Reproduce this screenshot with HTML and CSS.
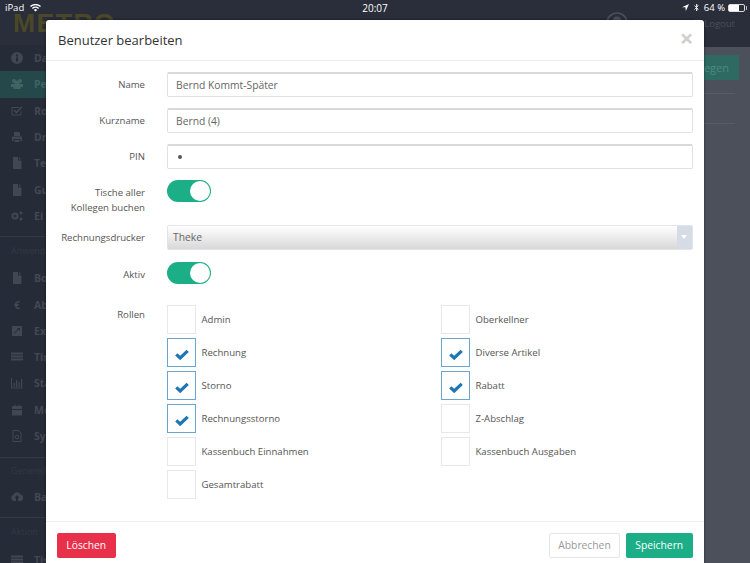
FILE: index.html
```html
<!DOCTYPE html>
<html lang="de">
<head>
	<meta charset="UTF-8">
	<title>Benutzer bearbeiten</title>
	<link rel="stylesheet" href="styles.css">
</head>
<body>
	<div class="app">
		<!-- Kopfzeile mit Statusleiste -->
		<div class="top">
			<div class="status">
				<div class="status-left">iPad
					<svg class="wifi" viewBox="0 0 14 10"><path d="M7 9.6 4.9 7.4a3 3 0 0 1 4.2 0zM3.6 6.2 2.4 5a6.6 6.6 0 0 1 9.2 0l-1.2 1.2a4.9 4.9 0 0 0-6.8 0zM1.2 3.8 0 2.6a10 10 0 0 1 14 0l-1.2 1.2a8.3 8.3 0 0 0-11.6 0z" fill="#fff"/></svg>
				</div>
				<div class="status-time">20:07</div>
				<div class="status-right">
					<svg class="loc" viewBox="0 0 8 8"><path d="M8 0 0 3.6h3.9L4.4 8z" fill="#fff"/></svg>
					<svg class="bt" viewBox="0 0 6 10"><path d="M.5 2.6 5 7 3 9V1l2 2L.5 7.4" fill="none" stroke="#fff"/></svg>
					<span>64 %</span>
					<div class="battery"><div class="battery-level"></div></div>
				</div>
			</div>
			<div class="brand">
				<div class="logo">METRO</div>
				<div class="user">
					<svg class="avatar" viewBox="0 0 22 22"><circle cx="11" cy="11" r="10" fill="none" stroke="#4b4f5b" stroke-width="1.6"/><circle cx="11" cy="9" r="4.5" fill="#4b4f5b"/></svg>
					<div class="logout">
						<svg class="logout-icon" viewBox="0 0 8 9"><path d="M7 .5H1v8h6" fill="none" stroke="#4b4f5b"/></svg>
						Logout
					</div>
				</div>
			</div>
		</div>
		<div class="under">
			<!-- Seitenleiste hinter dem Dialog -->
			<div class="side">
				<ul class="side-list">
					<li class="side-item"><svg class="side-icon" viewBox="0 0 12 12"><path d="M6 0a6 6 0 1 0 0 12A6 6 0 0 0 6 0zM5 2.5h2v2H5zM5 5.5h2v4H5z" fill-rule="evenodd"/></svg>Da</li>
					<li class="side-item side-active"><svg class="side-icon" viewBox="0 0 12 12"><circle cx="3" cy="3" r="2"/><circle cx="9" cy="3" r="2"/><circle cx="6" cy="5" r="2.5"/><path d="M0 6h12v3H9.5v2h-7V9H0z"/></svg>Pe</li>
					<li class="side-item"><svg class="side-icon side-outline" viewBox="0 0 12 12"><path d="M10 6.5V10H1V2.5h7"/><path d="M3 5l2.5 2.5L11 1.500" stroke-width="1.6"/></svg>Ro</li>
					<li class="side-item"><svg class="side-icon" viewBox="0 0 12 12"><path d="M3 1h5l1 1v3H3zM1 5.500h10V10H9.500V8h-7v2H1zM3.500 9h5v2h-5z"/></svg>Dr</li>
					<li class="side-item"><svg class="side-icon" viewBox="0 0 12 12"><path d="M2 0h5v3.500h3.500V12H2zM8 0l2.500 2.500H8z"/></svg>Te</li>
					<li class="side-item"><svg class="side-icon" viewBox="0 0 12 12"><path d="M2 0h5v3.500h3.500V12H2zM8 0l2.500 2.500H8z"/></svg>Gu</li>
					<li class="side-item"><svg class="side-icon" viewBox="0 0 12 12"><circle cx="4" cy="6" r="2.6" fill="none" stroke-width="2" stroke="#434753"/><circle cx="10" cy="3" r="1.5"/><circle cx="10" cy="9" r="1.5"/></svg>Ei</li>
				</ul>
				<div class="side-head">Anwend</div>
				<ul class="side-list">
					<li class="side-item"><svg class="side-icon" viewBox="0 0 12 12"><path d="M2 0h5v3.500h3.500V12H2zM8 0l2.500 2.500H8z"/></svg>Bo</li>
					<li class="side-item"><span class="side-icon side-euro">€</span>Ab</li>
					<li class="side-item"><svg class="side-icon" viewBox="0 0 12 12"><path d="M1 1h10v10H1zM3 9l4.500-4.500L9 6V3H6l1 1-4.500 4.500z" fill-rule="evenodd"/></svg>Ex</li>
					<li class="side-item"><svg class="side-icon" viewBox="0 0 12 12"><path d="M0 1.500h12v2H0zM0 4.500h12v2H0zM0 7.500h12v2H0z"/></svg>Tin</li>
					<li class="side-item"><svg class="side-icon" viewBox="0 0 12 12"><path d="M0 1h1v9.500h11v1H0zM2.500 6h1.200v4H2.500zM5 3h1.200v7H5zM7.500 5h1.200v5H7.500zM10 2h1.200v8H10z"/></svg>Sta</li>
					<li class="side-item"><svg class="side-icon" viewBox="0 0 12 12"><path d="M1 2h2.500V.5h1V2h3V.5h1V2H11v3H1zM1 6h10v5.500H1z"/></svg>Mo</li>
					<li class="side-item"><svg class="side-icon side-outline" viewBox="0 0 12 12"><path d="M2 .5h5.500L10 3v8.500H2z"/><circle cx="6" cy="7" r="1.8"/></svg>Sys</li>
				</ul>
				<div class="side-head side-head-small">Generell</div>
				<ul class="side-list">
					<li class="side-item"><svg class="side-icon" viewBox="0 0 12 12"><path d="M3 10a3 3 0 0 1-.5-5.900 3.500 3.500 0 0 1 6.800-.5A3.200 3.200 0 0 1 9 10H7V7h1.500L6 4 3.500 7H5v3z"/></svg>Ba</li>
				</ul>
				<div class="side-head">Aktion</div>
				<ul class="side-list">
					<li class="side-item"><svg class="side-icon" viewBox="0 0 12 12"><path d="M0 1.500h12v2H0zM0 4.500h12v2H0zM0 7.500h12v2H0z"/></svg>Tis</li>
				</ul>
			</div>
			<div class="main">
				<div class="main-btn">egen</div>
				<div class="main-line"></div>
				<div class="main-line"></div>
			</div>
		</div>
	</div>

	<div class="dialog">
		<div class="dialog-title">
			Benutzer bearbeiten
			<span class="dialog-close">×</span>
		</div>
		<div class="dialog-content">
			<div class="row">
				<label class="row-label">Name</label>
				<input class="input" type="text" value="Bernd Kommt-Später">
			</div>
			<div class="row">
				<label class="row-label">Kurzname</label>
				<input class="input" type="text" value="Bernd (4)">
			</div>
			<div class="row">
				<label class="row-label">PIN</label>
				<div class="input input-pin"><span class="pin-dot"></span></div>
			</div>
			<div class="row row-double">
				<label class="row-label">Tische aller<br>Kollegen buchen</label>
				<div class="toggle"><div class="toggle-knob"></div></div>
			</div>
			<div class="row">
				<label class="row-label">Rechnungsdrucker</label>
				<div class="select">
					<div class="select-value">Theke</div>
					<div class="select-arrow"></div>
				</div>
			</div>
			<div class="row">
				<label class="row-label">Aktiv</label>
				<div class="toggle"><div class="toggle-knob"></div></div>
			</div>
			<div class="row row-roles">
				<label class="row-label">Rollen</label>
				<div class="roles">
					<div class="role"><span class="check"></span>Admin</div>
					<div class="role"><span class="check"></span>Oberkellner</div>
					<div class="role"><span class="check checked"><svg viewBox="0 0 14 11"><path d="M1.3 5.3 5.2 9 12.7 1.800" fill="none" stroke="#1f76b4" stroke-width="3.2"/></svg></span>Rechnung</div>
					<div class="role"><span class="check checked"><svg viewBox="0 0 14 11"><path d="M1.3 5.3 5.2 9 12.7 1.800" fill="none" stroke="#1f76b4" stroke-width="3.2"/></svg></span>Diverse Artikel</div>
					<div class="role"><span class="check checked"><svg viewBox="0 0 14 11"><path d="M1.3 5.3 5.2 9 12.7 1.800" fill="none" stroke="#1f76b4" stroke-width="3.2"/></svg></span>Storno</div>
					<div class="role"><span class="check checked"><svg viewBox="0 0 14 11"><path d="M1.3 5.3 5.2 9 12.7 1.800" fill="none" stroke="#1f76b4" stroke-width="3.2"/></svg></span>Rabatt</div>
					<div class="role"><span class="check checked"><svg viewBox="0 0 14 11"><path d="M1.3 5.3 5.2 9 12.7 1.800" fill="none" stroke="#1f76b4" stroke-width="3.2"/></svg></span>Rechnungsstorno</div>
					<div class="role"><span class="check"></span>Z-Abschlag</div>
					<div class="role"><span class="check"></span>Kassenbuch Einnahmen</div>
					<div class="role"><span class="check"></span>Kassenbuch Ausgaben</div>
					<div class="role"><span class="check"></span>Gesamtrabatt</div>
				</div>
			</div>
		</div>
		<div class="dialog-footer">
			<a class="btn btn-red" href="#">Löschen</a>
			<div class="footer-right">
				<a class="btn btn-white" href="#">Abbrechen</a>
				<a class="btn btn-green" href="#">Speichern</a>
			</div>
		</div>
	</div>
</body>
</html>
```

FILE: styles.css
```css
html, body {
	margin: 0;
	padding: 0;
	height: 100%;
	overflow: hidden;
}
body {
	font-family: "Open Sans", "Liberation Sans", sans-serif;
	font-size: 9.6px;
	color: #555;
	background: #4c505b;
}

/* Hintergrund */
.app {
	display: flex;
	flex-direction: column;
	height: 563px;
}
.top {
	height: 47px;
	background: #2a2d3a;
	flex: none;
}
.status {
	display: flex;
	justify-content: space-between;
	align-items: center;
	height: 15px;
	padding: 0 4px 0 5px;
	color: #fff;
	font-size: 9.5px;
	position: relative;
}
.status-left, .status-right {
	display: flex;
	align-items: center;
	gap: 4px;
}
.status-time {
	position: absolute;
	left: 0;
	right: 0;
	text-align: center;
	font-size: 10px;
}
.wifi { width: 11px; height: 8px; margin-left: 2px; }
.loc { width: 7px; height: 7px; }
.bt { width: 5px; height: 9px; margin: 0 1px; }
.battery {
	width: 15px;
	height: 6px;
	border: 1px solid #ddd;
	border-radius: 2px;
	margin: 0 1px 0 -1px;
	position: relative;
}
.battery:after {
	content: "";
	position: absolute;
	right: -3px;
	top: 1px;
	width: 1.5px;
	height: 4px;
	background: #bbb;
}
.battery-level {
	width: 10px;
	height: 6px;
	background: #fff;
}
.brand {
	display: flex;
	justify-content: space-between;
	height: 32px;
}
.logo {
	margin: -7px 0 0 13px;
	font-family: "Liberation Sans", sans-serif;
	font-weight: bold;
	font-size: 26.5px;
	letter-spacing: 1.5px;
	color: #4a4827;
}
.user {
	display: flex;
	align-items: flex-start;
	gap: 66px;
	padding-right: 15px;
	color: #4b4f5b;
	font-size: 9.5px;
}
.avatar { width: 22px; height: 22px; margin-top: -3px; }
.logout {
	display: flex;
	align-items: center;
	gap: 3px;
	height: 16px;
}
.logout-icon { width: 7px; height: 9px; }
.under {
	display: flex;
	flex: 1;
	min-height: 0;
}

/* Seitenleiste */
.side {
	width: 46px;
	flex: none;
	margin-top: -2px;
	background: #262b38;
	color: #444854;
	font-weight: bold;
	font-size: 10.5px;
	overflow: hidden;
	white-space: nowrap;
}
.side-list {
	list-style: none;
	margin: 0;
	padding: 0;
}
.side-item {
	display: flex;
	align-items: center;
	height: 26.3px;
	padding-left: 11px;
	gap: 11px;
}
.side-active {
	background: #25484a;
	color: #3f6462;
}
.side-icon {
	width: 12px;
	height: 12px;
	flex: none;
	fill: #434753;
}
.side-active .side-icon { fill: #3f6462; }
.side-outline {
	fill: none;
	stroke: #434753;
}
.side-euro {
	text-align: center;
	line-height: 12px;
}
.side-head {
	margin-top: 7px;
	border-top: 1px solid #343845;
	height: 28px;
	line-height: 28px;
	padding-left: 11px;
	font-weight: normal;
	font-size: 9px;
	color: #343845;
}
.side-head-small {
	margin-top: 8px;
	height: 26px;
	line-height: 25px;
}

/* Inhalt hinter dem Dialog */
.main {
	flex: 1;
	padding: 8px 11px;
	display: flex;
	flex-direction: column;
	align-items: flex-end;
}
.main-btn {
	width: 90px;
	height: 25px;
	line-height: 25px;
	background: #2e6a62;
	color: #4c8a80;
	text-align: right;
	padding-right: 10px;
	box-sizing: border-box;
	font-size: 11px;
	margin-bottom: 13px;
	border-radius: 1px;
}
.main-line {
	width: 90px;
	height: 1px;
	background: #585c67;
	margin: 0 4px 29px 0;
}

/* Dialog */
.dialog {
	position: absolute;
	left: 46px;
	top: 20px;
	width: 657.5px;
	height: 560px;
	background: #fff;
	border-radius: 3px;
	box-shadow: 0 0 3px rgba(0, 0, 0, .5);
	display: flex;
	flex-direction: column;
}
.dialog-title {
	height: 40px;
	line-height: 40px;
	padding-left: 12px;
	border-bottom: 1px solid #eee;
	color: #333;
	font-size: 13px;
	position: relative;
}
.dialog-close {
	position: absolute;
	top: -2px;
	right: 10px;
	font-size: 24px;
	font-weight: bold;
	color: #cfcfcf;
}
.dialog-content {
	padding: 11px 11px 0 0;
	height: 461px;
	box-sizing: border-box;
	flex: none;
	border-bottom: 1px solid #eee;
}
.row {
	display: flex;
	margin-bottom: 11.5px;
}
.row-double {
	margin-bottom: 10px;
}
.row-label {
	width: 99px;
	margin-right: 22px;
	text-align: right;
	line-height: 15px;
	padding-top: 5px;
	flex: none;
}
.input {
	flex: 1;
	height: 24.5px;
	min-width: 0;
	box-sizing: border-box;
	margin: 0;
	padding: 0 8px;
	border: 1px solid #dfe0e8;
	border-top: 2px solid #d9d9d9;
	border-radius: 2px;
	outline: none;
	font-family: inherit;
	font-size: 10.3px;
	color: #666;
}
.input-pin {
	display: flex;
	align-items: center;
}
.pin-dot {
	width: 4px;
	height: 4px;
	margin-left: 2px;
	border-radius: 50%;
	background: #555;
}
.toggle {
	width: 44px;
	height: 22px;
	box-sizing: border-box;
	border-radius: 11px;
	background: #1cae86;
	display: flex;
	justify-content: flex-end;
	padding: 1px;
}
.toggle-knob {
	width: 20px;
	height: 20px;
	border-radius: 50%;
	background: #fff;
}
.select {
	flex: 1;
	display: flex;
	height: 25px;
	border-radius: 2px;
	background: linear-gradient(#fff, #d8d8d8);
	border: 1px solid #e3e3ea;
	box-sizing: border-box;
}
.select-value {
	flex: 1;
	padding-left: 5px;
	line-height: 23px;
	font-size: 10.3px;
	color: #666;
}
.select-arrow {
	width: 15px;
	background: #d5dce6;
	position: relative;
}
.select-arrow:after {
	content: "";
	position: absolute;
	left: 4px;
	top: 9px;
	border: 3px solid transparent;
	border-top: 4px solid #fff;
}
.row-roles {
	margin-top: 18.5px;
}
.roles {
	flex: 1;
	display: grid;
	grid-template-columns: 274px 1fr;
	grid-auto-rows: 33px;
	margin-top: .5px;
}
.role {
	display: flex;
	align-items: center;
	gap: 5.5px;
}
.check {
	width: 29px;
	height: 29px;
	box-sizing: border-box;
	border: 1.5px solid #e6e8ec;
	display: flex;
	align-items: center;
	justify-content: center;
}
.checked {
	border-color: #6aa5cf;
}
.checked svg {
	width: 14px;
	height: 11px;
	margin-top: 4px;
}

/* Fusszeile */
.dialog-footer {
	display: flex;
	justify-content: space-between;
	padding: 10.5px 11px 0;
}
.footer-right {
	display: flex;
	gap: 6px;
}
.btn {
	display: block;
	height: 25px;
	line-height: 25px;
	box-sizing: border-box;
	border-radius: 2px;
	text-align: center;
	text-decoration: none;
	font-size: 10.3px;
}
.btn-red { width: 58.5px; background: #e8304a; color: #fff; }
.btn-white { width: 71px; border: 1px solid #e4e6ea; line-height: 23px; color: #999; }
.btn-green { width: 66.5px; background: #1cae86; color: #fff; }
```
